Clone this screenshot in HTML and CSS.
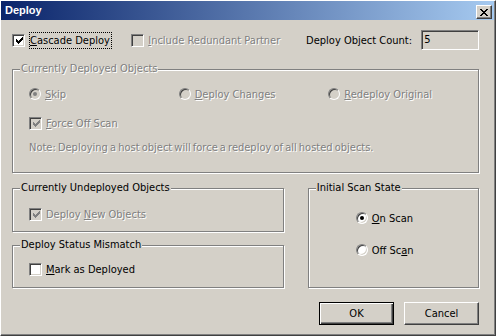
FILE: index.html
```html
<!DOCTYPE html>
<html lang="en">
<head>
    <meta charset="UTF-8">
    <title>Deploy</title>
    <link rel="stylesheet" href="styles.css">
</head>
<body>
    <div class="window">
        <div class="titlebar">
            <span class="title">Deploy</span>
            <span class="close-btn">
                <svg width="8" height="7" viewBox="0 0 8 7" shape-rendering="crispEdges">
                    <path d="M0 0h2v1h-2zM6 0h2v1h-2zM1 1h2v1h-2zM5 1h2v1h-2zM2 2h4v1h-4zM3 3h2v1h-2zM2 4h4v1h-4zM1 5h2v1h-2zM5 5h2v1h-2zM0 6h2v1h-2zM6 6h2v1h-2z" fill="#000"/>
                </svg>
            </span>
        </div>

        <div class="content">
            <div class="top-row">
                <label class="opt cascade">
                    <span class="check checked">
                        <svg width="7" height="7" viewBox="0 0 7 7" shape-rendering="crispEdges"><path d="M6 0h1v3h-1v1h-1v1h-1v1h-1v1h-1v-1h-1v-1h-1v-3h1v1h1v1h1v-1h1v-1h1z" fill="currentColor"/></svg>
                    </span>
                    <span class="focus"><u>C</u>ascade Deploy</span>
                </label>
                <label class="opt redundant dim">
                    <span class="check off"></span>
                    <span><u>I</u>nclude Redundant Partner</span>
                </label>
                <span class="count-label">Deploy Object Count:</span>
                <span class="textbox">5</span>
            </div>

            <fieldset class="group deployed">
                <legend class="dim">Currently Deployed Objects</legend>
                <div class="deployed-body">
                    <div class="radio-row">
                        <label class="opt dim"><span class="radio off selected"></span><span><u>S</u>kip</span></label>
                        <label class="opt dim"><span class="radio off"></span><span><u>D</u>eploy Changes</span></label>
                        <label class="opt dim"><span class="radio off"></span><span><u>R</u>edeploy Original</span></label>
                    </div>
                    <label class="opt force dim">
                        <span class="check off checked">
                            <svg width="7" height="7" viewBox="0 0 7 7" shape-rendering="crispEdges"><path d="M6 0h1v3h-1v1h-1v1h-1v1h-1v1h-1v-1h-1v-1h-1v-3h1v1h1v1h1v-1h1v-1h1z" fill="currentColor"/></svg>
                        </span>
                        <span><u>F</u>orce Off Scan</span>
                    </label>
                    <p class="note dim">Note: Deploying a host object will force a redeploy of all hosted objects.</p>
                </div>
            </fieldset>

            <div class="lower">
                <div class="left-col">
                    <fieldset class="group undeployed">
                        <legend>Currently Undeployed Objects</legend>
                        <div class="undeployed-body">
                            <label class="opt dim">
                                <span class="check off checked">
                                    <svg width="7" height="7" viewBox="0 0 7 7" shape-rendering="crispEdges"><path d="M6 0h1v3h-1v1h-1v1h-1v1h-1v1h-1v-1h-1v-1h-1v-3h1v1h1v1h1v-1h1v-1h1z" fill="currentColor"/></svg>
                                </span>
                                <span>Deploy <u>N</u>ew Objects</span>
                            </label>
                        </div>
                    </fieldset>

                    <fieldset class="group mismatch">
                        <legend>Deploy Status Mismatch</legend>
                        <div class="mismatch-body">
                            <label class="opt">
                                <span class="check"></span>
                                <span><u>M</u>ark as Deployed</span>
                            </label>
                        </div>
                    </fieldset>
                </div>

                <fieldset class="group scan-state">
                    <legend>Initial Scan State</legend>
                    <div class="scan-body">
                        <label class="opt"><span class="radio selected"></span><span><u>O</u>n Scan</span></label>
                        <label class="opt"><span class="radio"></span><span>Off Sc<u>a</u>n</span></label>
                    </div>
                </fieldset>
            </div>

            <div class="buttons">
                <button class="btn default">OK</button>
                <button class="btn">Cancel</button>
            </div>
        </div>
    </div>
</body>
</html>
```

FILE: styles.css
```css
body {
    margin: 0;
    font-family: 'DejaVu Sans Condensed', 'Liberation Sans', sans-serif;
    font-size: 11px;
    color: #000;
    background-color: #d4d0c8;
}

.window {
    width: 496px;
    height: 336px;
    box-sizing: border-box;
    overflow: hidden;
    background-color: #d4d0c8;
    border: 1px solid;
    border-color: #ffffff #404040 #404040 #ffffff;
    box-shadow: inset -1px -1px 0 #808080;
}

.titlebar {
    height: 19px;
    margin-right: 1px;
    padding: 0 2px 0 4px;
    display: flex;
    align-items: flex-start;
    justify-content: space-between;
    background: linear-gradient(to right, #0a246a, #a6caf0);
}

.title {
    color: #fff;
    font-family: 'Liberation Sans', sans-serif;
    font-weight: bold;
    font-size: 11px;
    line-height: 19px;
}

.close-btn {
    width: 16px;
    height: 14px;
    margin-top: 4px;
    box-sizing: border-box;
    display: flex;
    align-items: center;
    justify-content: center;
    background-color: #d4d0c8;
    border: 1px solid;
    border-color: #ffffff #404040 #404040 #ffffff;
    box-shadow: inset -1px -1px 0 #808080;
}

.content {
    padding: 10px 16px 0 11px;
}

/* common controls */

.opt {
    display: flex;
    align-items: center;
    gap: 4px;
    height: 16px;
    white-space: nowrap;
}

.dim {
    color: #808080;
    text-shadow: 1px 1px 0 #fff;
}

.check {
    width: 13px;
    height: 13px;
    flex: none;
    box-sizing: border-box;
    display: flex;
    align-items: center;
    justify-content: center;
    background-color: #fff;
    color: #000;
    border: 1px solid;
    border-color: #808080 #ffffff #ffffff #808080;
    box-shadow: inset 1px 1px 0 #404040, inset -1px -1px 0 #d4d0c8;
}

.check.off {
    background-color: #d4d0c8;
    color: #808080;
}

.check svg {
    margin: 1px 0 0 1px;
}

.radio {
    width: 12px;
    height: 12px;
    flex: none;
    box-sizing: border-box;
    position: relative;
    border-radius: 50%;
    border: 1px solid;
    border-color: #808080 #ffffff #ffffff #808080;
    background-color: #fff;
    box-shadow: inset 1px 1px 0 #404040, inset -1px -1px 0 #d4d0c8;
}

.radio.off {
    background-color: #d4d0c8;
}

.radio.selected::after {
    content: '';
    position: absolute;
    left: 3px;
    top: 3px;
    width: 4px;
    height: 4px;
    border-radius: 50%;
    background-color: #000;
}

.radio.off.selected::after {
    background-color: #808080;
}

/* top row */

.top-row {
    height: 20px;
    display: flex;
    align-items: center;
}

.cascade {
    width: 120px;
}

.focus {
    line-height: 15px;
    padding-right: 1px;
    border: 1px dotted #000;
}

.redundant {
    width: 176px;
}

.count-label {
    width: 116px;
}

.textbox {
    width: 58px;
    height: 20px;
    box-sizing: border-box;
    padding-left: 2px;
    line-height: 18px;
    background-color: #d4d0c8;
    border: 1px solid;
    border-color: #808080 #ffffff #ffffff #808080;
    box-shadow: inset 1px 1px 0 #404040, inset -1px -1px 0 #d4d0c8;
}

/* group boxes */

.group {
    margin: 0;
    padding: 0;
    min-width: 0;
    border: 1px solid #808080;
    box-shadow: inset 1px 1px 0 #fff, 1px 1px 0 #fff;
}

.group legend {
    margin-left: 7px;
    padding: 0 1px;
    line-height: 14px;
    background-color: #d4d0c8;
}

.deployed {
    margin-top: 12px;
}

.deployed-body {
    padding: 10px 0 16px 16px;
}

.radio-row {
    display: flex;
}

.radio-row .opt {
    width: 152px;
}

.force {
    margin-top: 13px;
}

.note {
    margin: 9px 0 0;
    line-height: 16px;
    word-spacing: -1px;
}

.lower {
    margin-top: 8px;
    display: flex;
    gap: 24px;
}

.left-col {
    width: 273px;
}

.undeployed-body {
    padding: 11px 0 9px 16px;
}

.mismatch {
    margin-top: 6px;
}

.mismatch-body {
    padding: 9px 0 10px 16px;
}

.scan-state {
    width: 172px;
    box-sizing: border-box;
}

.scan-body {
    padding: 15px 0 0 47px;
    display: flex;
    flex-direction: column;
    gap: 16px;
}

/* buttons */

.buttons {
    margin-top: 14px;
    display: flex;
    justify-content: flex-end;
    gap: 10px;
}

.btn {
    width: 75px;
    height: 23px;
    padding: 0;
    font-family: inherit;
    font-size: 11px;
    color: #000;
    background-color: #d4d0c8;
    border: 1px solid;
    border-color: #ffffff #404040 #404040 #ffffff;
    box-shadow: inset -1px -1px 0 #808080;
}

.btn.default {
    border-color: #000;
    box-shadow: inset 1px 1px 0 #fff, inset -1px -1px 0 #404040, inset -2px -2px 0 #808080;
}
```
